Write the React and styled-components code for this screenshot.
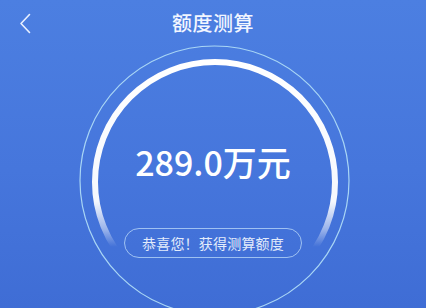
import React from "react";
import styled, { createGlobalStyle } from "styled-components";

const GlobalStyle = createGlobalStyle`
  html, body {
    margin: 0;
    padding: 0;
  }
  body {
    font-family: "Noto Sans CJK SC", "Noto Sans", sans-serif;
    background: #4577dc;
  }
`;

const Page = styled.div`
  width: 426px;
  height: 308px;
  overflow: hidden;
  background: linear-gradient(180deg, #4c7fe1 0%, #4676dc 55%, #3f6dd5 100%);
  color: #fff;
`;

const Header = styled.header`
  position: relative;
  height: 44px;
  display: flex;
  align-items: center;
  justify-content: center;
`;

const BackButton = styled.button`
  position: absolute;
  left: 14px;
  top: 10px;
  width: 22px;
  height: 26px;
  padding: 0;
  border: 0;
  background: none;
  display: flex;
  align-items: center;
  justify-content: center;
  cursor: pointer;
`;

const Title = styled.h1`
  margin: 0;
  font-size: 20px;
  font-weight: 500;
  letter-spacing: 0.5px;
  color: #f2f6ff;
`;

const Stage = styled.section`
  position: relative;
  height: 264px;
  display: flex;
  flex-direction: column;
  align-items: center;
`;

const Ring = styled.svg`
  position: absolute;
  left: 0;
  top: 0;
  pointer-events: none;
`;

const Amount = styled.div`
  position: relative;
  margin-top: 98px;
  font-size: 34px;
  line-height: 40px;
  font-weight: 500;
  color: #ffffff;
`;

const Notice = styled.div`
  position: relative;
  margin-top: 46px;
  height: 28px;
  padding: 0 17px;
  border: 1px solid rgba(190, 220, 250, 0.75);
  border-radius: 15px;
  display: flex;
  align-items: center;
  font-size: 14px;
  color: #e3ecfb;
  letter-spacing: 0.2px;
`;

const Back = () => (
  <BackButton aria-label="返回">
    <svg width="12" height="21" viewBox="0 0 12 21">
      <path
        d="M10.5 1.5 L2 10.5 L10.5 19.5"
        fill="none"
        stroke="#e8f0ff"
        strokeWidth="1.6"
        strokeLinecap="round"
        strokeLinejoin="round"
      />
    </svg>
  </BackButton>
);

const Gauge = () => (
  <Ring width="426" height="264" viewBox="0 0 426 264">
    <defs>
      <linearGradient id="arcFade" x1="0" y1="18" x2="0" y2="258" gradientUnits="userSpaceOnUse">
        <stop offset="0" stopColor="#fff" stopOpacity="1" />
        <stop offset="0.58" stopColor="#fff" stopOpacity="0.95" />
        <stop offset="0.7" stopColor="#fff" stopOpacity="0.45" />
        <stop offset="0.77" stopColor="#fff" stopOpacity="0" />
      </linearGradient>
    </defs>
    <circle cx="214.5" cy="136.5" r="134.5" fill="none" stroke="#a9d6f5" strokeWidth="1.2" />
    <circle cx="215" cy="138" r="120" fill="none" stroke="url(#arcFade)" strokeWidth="6" />
  </Ring>
);

export default function App() {
  return (
    <>
      <GlobalStyle />
      <Page>
        <Header>
          <Back />
          <Title>额度测算</Title>
        </Header>
        <Stage>
          <Gauge />
          <Amount>289.0万元</Amount>
          <Notice>恭喜您！获得测算额度</Notice>
        </Stage>
      </Page>
    </>
  );
}
